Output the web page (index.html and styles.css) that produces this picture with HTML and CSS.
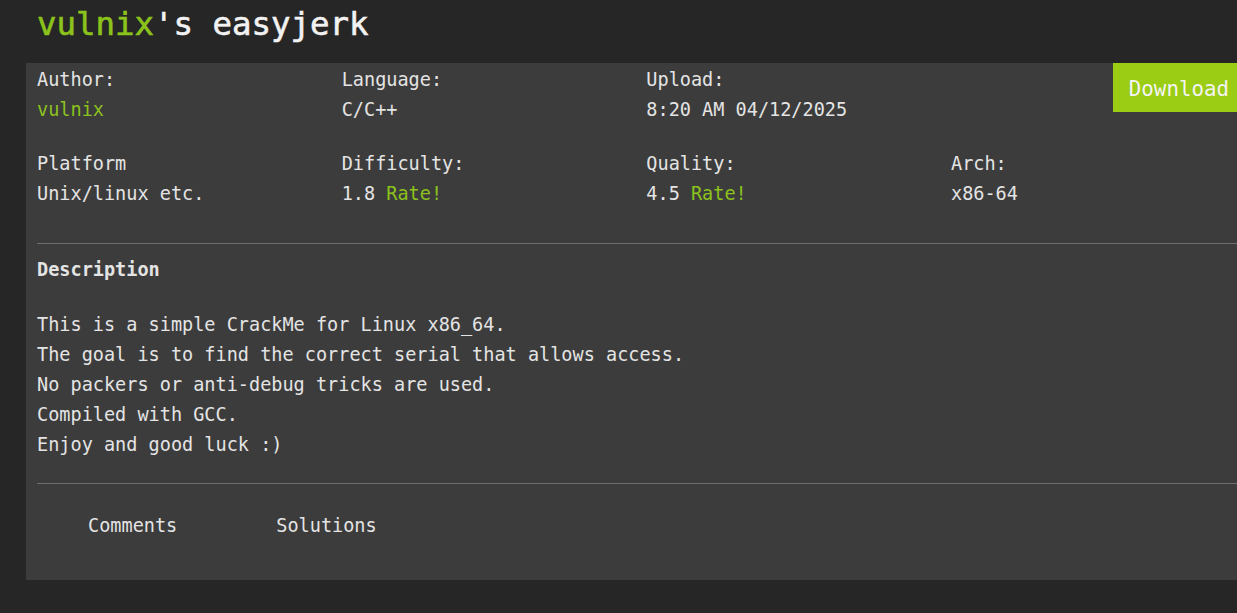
FILE: index.html
```html
<!DOCTYPE html>
<html>
<head>
<meta charset="utf-8">
<link rel="stylesheet" href="styles.css">
</head>
<body>
<div class="page">
  <h1 class="title"><span class="green">vulnix</span>'s easyjerk</h1>
  <div class="panel">
    <a class="download">Download</a>
    <div class="grid">
      <div class="cell"><div>Author:</div><div class="green">vulnix</div></div>
      <div class="cell"><div>Language:</div><div>C/C++</div></div>
      <div class="cell"><div>Upload:</div><div>8:20 AM 04/12/2025</div></div>
      <div class="cell"></div>
      <div class="cell"><div>Platform</div><div>Unix/linux etc.</div></div>
      <div class="cell"><div>Difficulty:</div><div>1.8 <span class="green">Rate!</span></div></div>
      <div class="cell"><div>Quality:</div><div>4.5 <span class="green">Rate!</span></div></div>
      <div class="cell"><div>Arch:</div><div>x86-64</div></div>
    </div>
    <hr class="sep first">
    <div class="desc-title">Description</div>
    <div class="desc">
      <div>This is a simple CrackMe for Linux x86_64.</div>
      <div>The goal is to find the correct serial that allows access.</div>
      <div>No packers or anti-debug tricks are used.</div>
      <div>Compiled with GCC.</div>
      <div>Enjoy and good luck :)</div>
    </div>
    <hr class="sep second">
    <div class="tabs">
      <span class="tab">Comments</span>
      <span class="tab">Solutions</span>
    </div>
  </div>
</div>
</body>
</html>
```
FILE: styles.css
```css
html, body {
  margin: 0;
  padding: 0;
  background: #262626;
  overflow: hidden;
}
body {
  font-family: "DejaVu Sans Mono", "Liberation Mono", monospace;
  color: #e4e4e4;
  font-size: 18.55px;
  line-height: 30px;
}
.page {
  padding-left: 26px;
}
.green {
  color: #8cc21c;
}
.title {
  margin: 0 0 19px 0;
  padding: 4px 0 0 11px;
  font-size: 32.4px;
  line-height: 40px;
  font-weight: normal;
  color: #f2f2f2;
  -webkit-text-stroke: 0.6px currentColor;
}
.panel {
  position: relative;
  width: 1219px;
  background: #3c3c3c;
  padding: 2px 0 39px 11px;
  box-sizing: border-box;
}
.download {
  position: absolute;
  top: 0;
  right: 0;
  height: 47px;
  padding: 2px 16px 0 16px;
  line-height: 49px;
  background: #9acd14;
  color: #f4f4f4;
  font-size: 20.8px;
}
.grid {
  display: grid;
  grid-template-columns: repeat(4, 304.67px);
  row-gap: 24px;
}
.sep {
  border: none;
  border-top: 1px solid #6e6e6e;
  margin: 34px 0 0 0;
  height: 0;
}
.sep.second {
  margin-top: 23px;
}
.desc-title {
  font-weight: bold;
  margin-top: 11px;
}
.desc {
  margin-top: 25px;
}
.tabs {
  margin-top: 27px;
  padding-left: 51px;
  display: flex;
  gap: 99px;
}
```
